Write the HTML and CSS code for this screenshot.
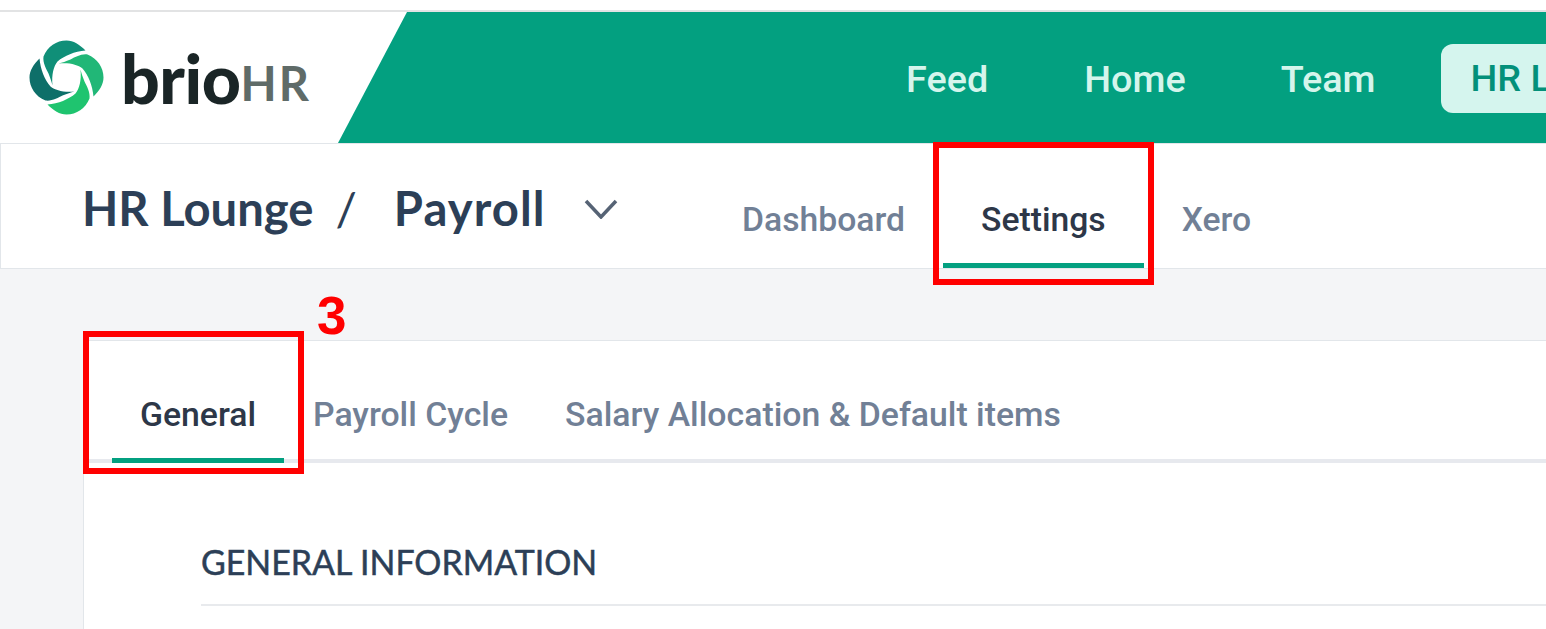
FILE: index.html
```html
<!DOCTYPE html>
<html>
<head>
<meta charset="utf-8">
<title>HR Lounge / Payroll - brioHR</title>
<link rel="stylesheet" href="styles.css">
</head>

<body>
<div class="top-strip"></div>

<header class="header">
    <div class="logo">
        <svg class="logo-mark" viewBox="-38.5 -38.5 77 77" aria-hidden="true">
            <path class="petal-top" d="M19 -27C13 -33 7 -37 0 -37C-10 -37 -19 -31 -23 -21C-24 -15 -20 -8 -18 -4C-16 1 -15 4 -14 8C-15 -3 -13 -11 -9 -16C-2 -22 8 -26 19 -27Z"/>
            <path class="petal-right" transform="rotate(90)" d="M19 -27C13 -33 7 -37 0 -37C-10 -37 -19 -31 -23 -21C-24 -15 -20 -8 -18 -4C-16 1 -15 4 -14 8C-15 -3 -13 -11 -9 -16C-2 -22 8 -26 19 -27Z"/>
            <path class="petal-bottom" transform="rotate(180)" d="M19 -27C13 -33 7 -37 0 -37C-10 -37 -19 -31 -23 -21C-24 -15 -20 -8 -18 -4C-16 1 -15 4 -14 8C-15 -3 -13 -11 -9 -16C-2 -22 8 -26 19 -27Z"/>
            <path class="petal-left" transform="rotate(270)" d="M19 -27C13 -33 7 -37 0 -37C-10 -37 -19 -31 -23 -21C-24 -15 -20 -8 -18 -4C-16 1 -15 4 -14 8C-15 -3 -13 -11 -9 -16C-2 -22 8 -26 19 -27Z"/>
        </svg>
        <span class="logo-brio">brio</span><span class="logo-hr">HR</span>
    </div>
    <nav class="main-nav">
        <a class="main-link">Feed</a>
        <a class="main-link">Home</a>
        <a class="main-link">Team</a>
        <a class="main-pill">HR Lounge</a>
    </nav>
</header>

<div class="subbar">
    <div class="crumbs">
        <span>HR Lounge</span>
        <span class="crumb-sep">/</span>
        <span class="crumb-page">Payroll</span>
        <svg class="chevron" viewBox="0 0 34 20" aria-hidden="true"><path d="M2 2L17 18L32 2"/></svg>
    </div>
    <div class="sub-tabs">
        <a class="sub-tab">Dashboard</a>
        <a class="sub-tab active">Settings</a>
        <a class="sub-tab">Xero</a>
    </div>
</div>

<main class="content">
    <section class="card">
        <div class="card-tabs">
            <a class="card-tab active">General</a>
            <a class="card-tab">Payroll Cycle</a>
            <a class="card-tab">Salary Allocation &amp; Default items</a>
        </div>
        <div class="card-body">
            <h2 class="section-title">GENERAL INFORMATION</h2>
        </div>
    </section>
</main>

<!-- annotations over the screenshot -->
<div class="mark mark-settings"></div>
<div class="mark mark-general"></div>
<div class="mark-num">3</div>
</body>
</html>
```

FILE: styles.css
```css
/* page */
body {
    margin: 0;
    width: 1546px;
    height: 629px;
    overflow: hidden;
    position: relative;
    background-color: #f4f5f7;
    font-family: 'Roboto', 'Liberation Sans', sans-serif;
}

a {
    display: block;
}

.top-strip {
    height: 10px;
    background: #fff;
    border-bottom: 2px solid #e2e3e4;
}

/* header */
.header {
    display: flex;
    height: 131px;
    background: #fff;
    border-bottom: 1px solid #e2e6ea;
}

.logo {
    position: absolute;
    left: 28px;
    top: 12px;
    height: 131px;
    display: flex;
    align-items: center;
}

.logo-mark {
    width: 77px;
    height: 77px;
    margin-right: 16px;
}

.petal-top { fill: #108f78; }
.petal-right { fill: #21b777; }
.petal-bottom { fill: #1fc46f; }
.petal-left { fill: #0e6f69; }

.logo-brio {
    font-family: 'Lato', sans-serif;
    font-weight: 900;
    font-size: 68px;
    line-height: 1;
    color: #1a2526;
    letter-spacing: -0.5px;
}

.logo-hr {
    font-family: 'Lato', sans-serif;
    font-weight: 700;
    font-size: 47px;
    line-height: 1;
    margin-top: 12px;
    letter-spacing: 2px;
    color: #5f6b68;
}

.main-nav {
    flex: 1;
    margin-left: 338px;
    padding: 2px 0 0 568px;
    display: flex;
    align-items: center;
    white-space: nowrap;
    overflow: hidden;
    background: #03a080;
    clip-path: polygon(69px 0, 100% 0, 100% 100%, 0 100%);
}

.main-link {
    font-weight: 500;
    font-size: 37.8px;
    color: #d5f5ec;
    margin-right: 96px;
}

.main-link:nth-child(2) {
    margin-right: 95px;
}

.main-link:nth-child(3) {
    margin-right: 65px;
}

.main-pill {
    font-weight: 500;
    font-size: 37.8px;
    color: #03907a;
    background: #d5f5ee;
    border-radius: 12px;
    height: 69px;
    line-height: 69px;
    padding: 0 30px;
}

/* breadcrumb bar */
.subbar {
    display: flex;
    height: 124px;
    background: #fff;
    border-left: 1px solid #e2e6ea;
    border-bottom: 1px solid #e2e6ea;
}

.crumbs {
    display: flex;
    align-items: center;
    width: 660px;
    height: 126px;
    padding-left: 81px;
    box-sizing: border-box;
    font-family: 'Lato', sans-serif;
    font-weight: 700;
    font-size: 47.2px;
    color: #2c3f57;
}

.crumb-sep {
    margin: 0 37px 0 22px;
    font-weight: 400;
}

.crumb-page {
    letter-spacing: 1.1px;
}

.chevron {
    width: 34px;
    height: 20px;
    margin-left: 38px;
    margin-top: 4px;
    fill: none;
    stroke: #566375;
    stroke-width: 3.5;
}

.sub-tabs {
    display: flex;
    margin-left: 81px;
}

.sub-tab {
    font-weight: 500;
    font-size: 33.7px;
    color: #718096;
    height: 124px;
    line-height: 152px;
    box-sizing: border-box;
    padding: 0 38px;
}

.sub-tab:first-child {
    padding-left: 0;
}

.sub-tab.active {
    color: #2d3748;
    border-bottom: 5px solid #03a080;
    margin-bottom: -1px;
}

/* content */
.content {
    padding: 71px 0 0 83px;
}

.card {
    background: #fff;
    border: 1px solid #e2e6ea;
    border-right: 0;
    border-bottom: 0;
    border-radius: 4px 0 0 0;
    height: 288px;
}

.card-tabs {
    display: flex;
    height: 122px;
    box-sizing: border-box;
    border-bottom: 4px solid #e7e9ee;
    padding-left: 28px;
}

.card-tab {
    font-weight: 500;
    font-size: 33.8px;
    color: #718096;
    line-height: 148px;
    height: 122px;
    box-sizing: border-box;
    margin-right: 57px;
}

.card-tab.active {
    color: #2d3748;
    width: 172px;
    text-align: center;
    margin-right: 29px;
    border-bottom: 5px solid #03a080;
}

.card-body {
    padding: 0 0 0 117px;
}

.section-title {
    margin: 0;
    padding: 79px 0 22px;
    font-family: 'Lato', sans-serif;
    font-weight: 400;
    font-size: 33.9px;
    line-height: 40px;
    color: #2c3f57;
    -webkit-text-stroke: 0.5px #2c3f57;
    border-bottom: 2px solid #e8eaed;
}

/* red annotation boxes */
.mark {
    position: absolute;
    box-sizing: border-box;
    border: 6px solid #ff0000;
}

.mark-settings {
    left: 933px;
    top: 142px;
    width: 221px;
    height: 143px;
}

.mark-general {
    left: 83px;
    top: 331px;
    width: 221px;
    height: 143px;
}

.mark-num {
    position: absolute;
    left: 317px;
    top: 286px;
    font-family: 'Liberation Sans', sans-serif;
    font-weight: 700;
    font-size: 53px;
    line-height: 60px;
    color: #ff0000;
}
```
